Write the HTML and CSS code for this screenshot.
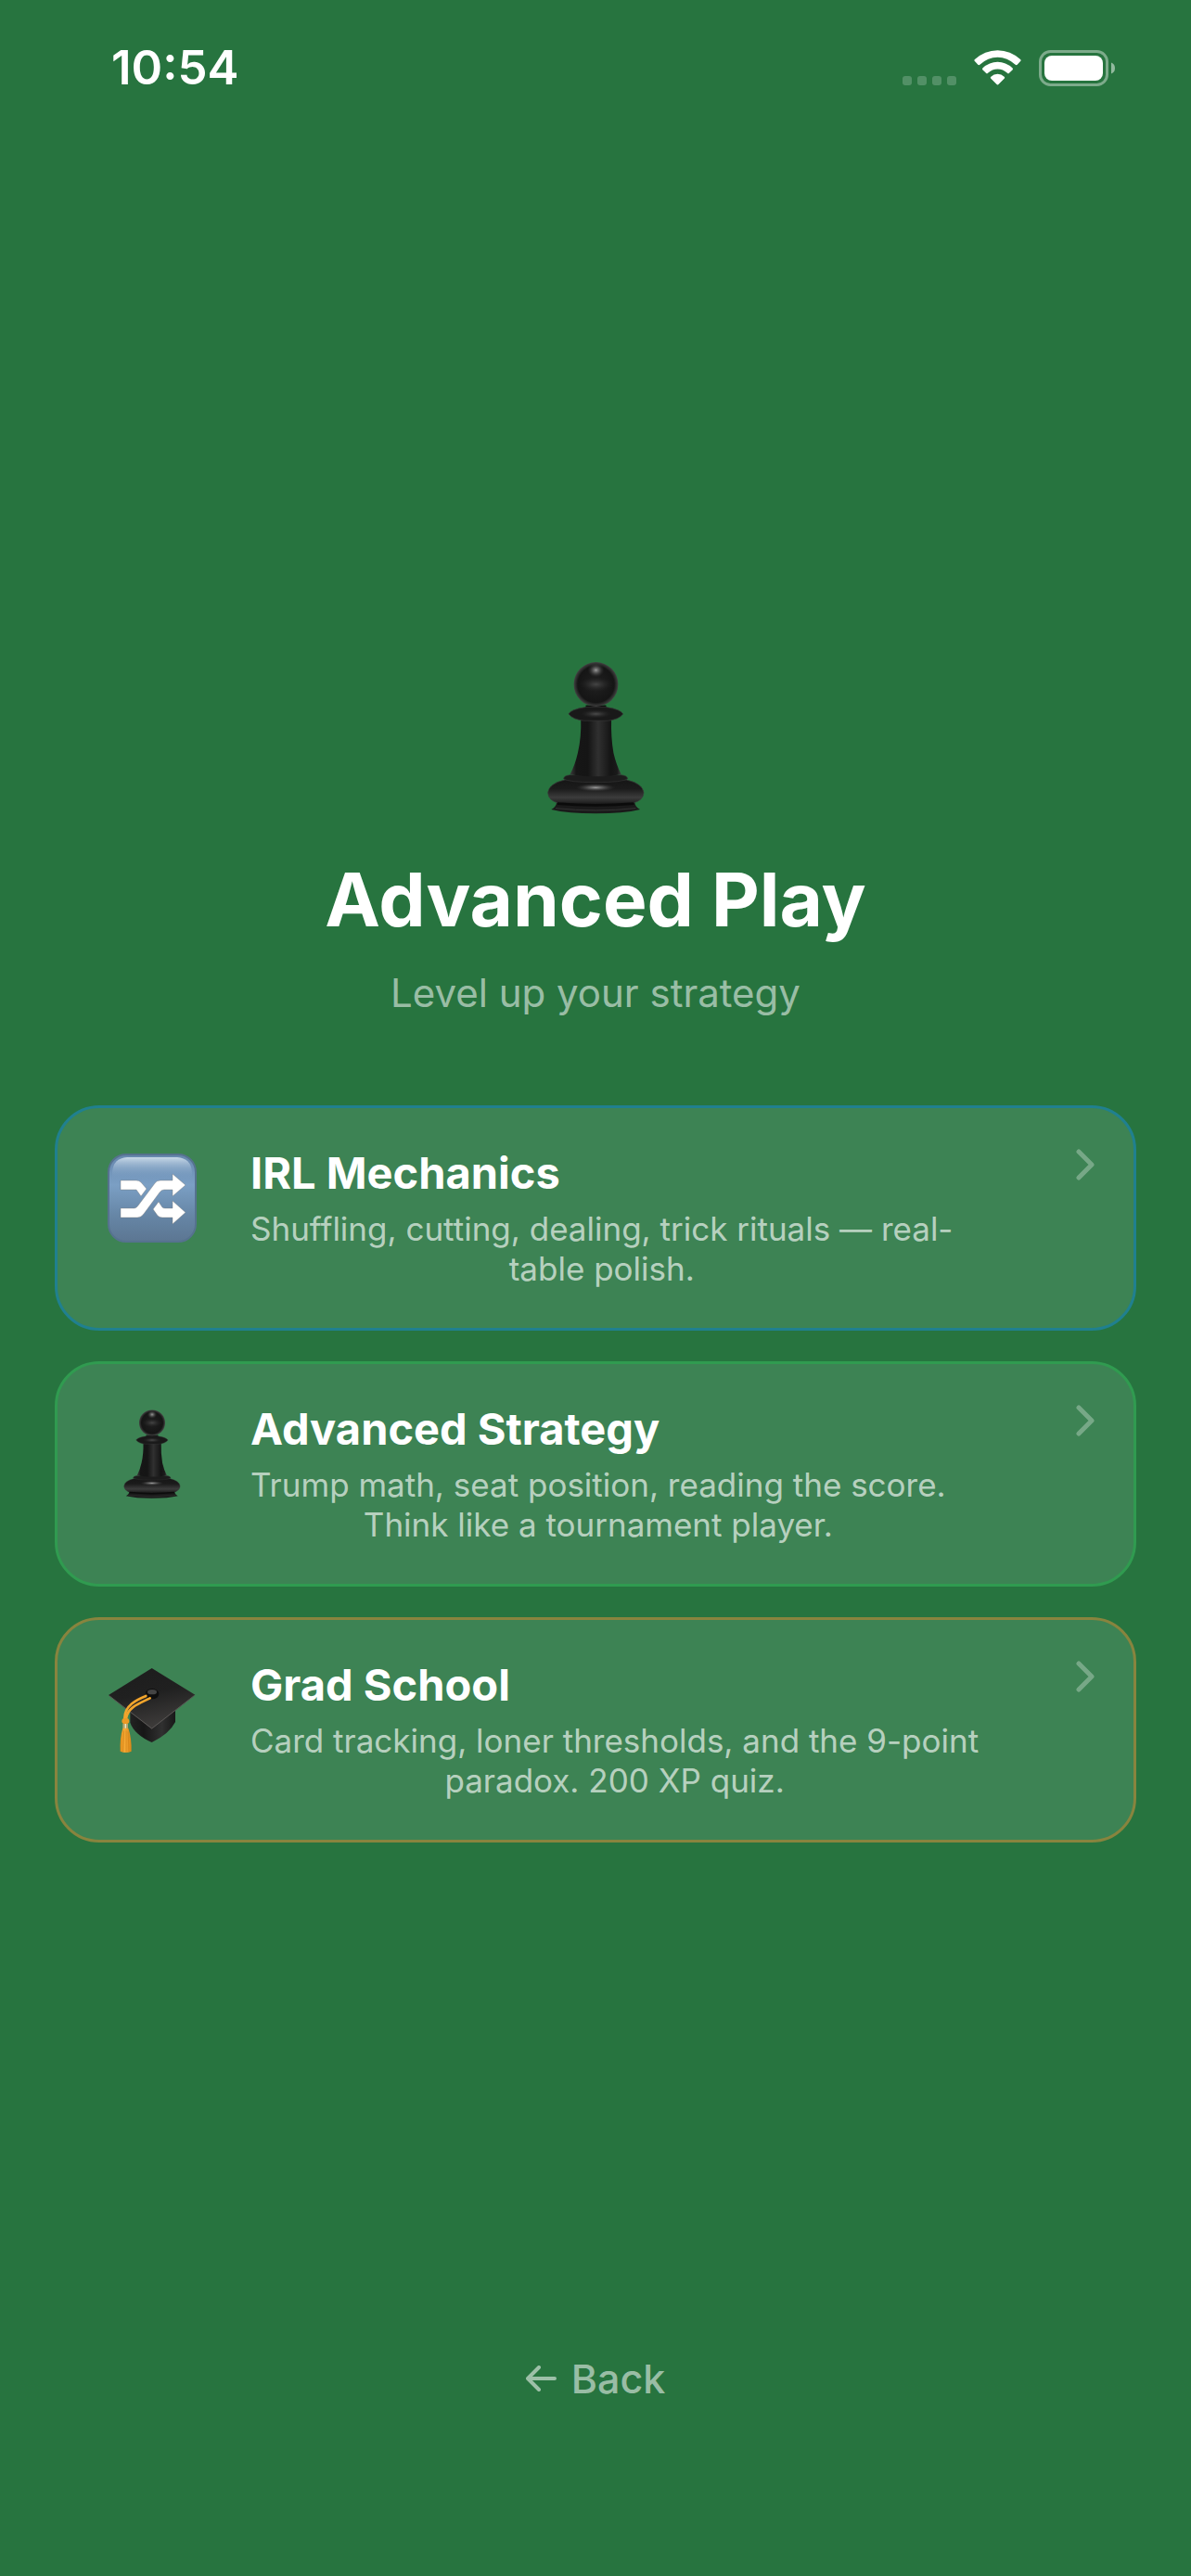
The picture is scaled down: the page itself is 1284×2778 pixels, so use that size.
FILE: index.html
```html
<!DOCTYPE html>
<html lang="en">
<head>
    <meta charset="UTF-8">
    <meta name="viewport" content="width=device-width, initial-scale=1.0">
    <title>Advanced Play</title>
    <link rel="stylesheet" href="styles.css">
</head>
<body>
    <!-- Shared pawn artwork -->
    <svg class="defs" width="0" height="0" aria-hidden="true">
        <defs>
            <linearGradient id="stem" x1="0" x2="1" y1="0" y2="0">
                <stop offset="0" stop-color="#3c3c3c"/>
                <stop offset="0.12" stop-color="#161616"/>
                <stop offset="0.35" stop-color="#151515"/>
                <stop offset="0.55" stop-color="#303030"/>
                <stop offset="0.8" stop-color="#141414"/>
                <stop offset="0.92" stop-color="#1a1a1a"/>
                <stop offset="1" stop-color="#424242"/>
            </linearGradient>
            <radialGradient id="ball" cx="0.5" cy="0.5" r="0.5">
                <stop offset="0" stop-color="#202020"/>
                <stop offset="0.82" stop-color="#151515"/>
                <stop offset="1" stop-color="#424242"/>
            </radialGradient>
            <radialGradient id="shine">
                <stop offset="0" stop-color="#9a9a9a"/>
                <stop offset="0.4" stop-color="#686868" stop-opacity="0.7"/>
                <stop offset="1" stop-color="#303030" stop-opacity="0"/>
            </radialGradient>
            <linearGradient id="base" x1="0" x2="0" y1="0" y2="1">
                <stop offset="0" stop-color="#161616"/>
                <stop offset="0.35" stop-color="#1b1b1b"/>
                <stop offset="0.7" stop-color="#3c3c3c"/>
                <stop offset="1" stop-color="#151515"/>
            </linearGradient>
            <symbol id="pawn" viewBox="50 38 322 494">
                <path d="M66 518Q84 508 83 495H337Q336 508 354 518Q300 531 210 531T66 518Z" fill="#1a1a1a"/>
                <path d="M80 514Q210 528 340 514" fill="none" stroke="#333" stroke-width="3"/>
                <path d="M110 422Q58 434 55 464Q57 489 88 497Q140 504 210 504T332 497Q364 489 366 464Q363 434 310 422Z" fill="url(#base)" stroke="#3a3a3a" stroke-width="2"/>
                <ellipse cx="210" cy="447" rx="65" ry="13" fill="url(#shine)"/>
                <path d="M86 499Q210 510 334 499" fill="none" stroke="#0b0b0b" stroke-width="8"/>
                <path d="M106 418Q107 408 128 406H292Q312 408 314 418Q300 430 210 430T106 418Z" fill="#1c1c1c" stroke="#333" stroke-width="2"/>
                <path d="M162 222Q164 285 152 335Q143 375 127 404Q160 411 210 411T293 404Q277 375 268 335Q259 285 261 222Z" fill="url(#stem)"/>
                <path d="M178 180V192H244V180Z" fill="#0c0c0c"/>
                <path d="M122 208Q130 193 178 186H244Q290 193 299 208Q285 226 250 230H172Q136 226 122 208Z" fill="#191919" stroke="#3a3a3a" stroke-width="2"/>
                <ellipse cx="211" cy="208" rx="50" ry="14" fill="url(#shine)" opacity="0.4"/>
                <circle cx="211" cy="112" r="72" fill="url(#ball)"/>
                <ellipse cx="211" cy="112" rx="55" ry="24" fill="url(#shine)" opacity="0.3"/>
                <ellipse cx="211" cy="66" rx="27" ry="23" fill="url(#shine)"/>
            </symbol>
            <symbol id="chevron" viewBox="0 0 20 34">
                <path d="M3 3L17 17L3 31" fill="none" stroke="currentColor" stroke-width="5" stroke-linecap="round" stroke-linejoin="round"/>
            </symbol>
        </defs>
    </svg>

    <header class="status-bar">
        <span class="time">10:54</span>
        <div class="status-icons">
            <svg class="dots" viewBox="0 0 58 10" aria-hidden="true">
                <rect width="10" height="10" rx="3"/>
                <rect x="16" width="10" height="10" rx="3"/>
                <rect x="32" width="10" height="10" rx="3"/>
                <rect x="48" width="10" height="10" rx="3"/>
            </svg>
            <svg class="wifi" viewBox="300 71 153 113" aria-hidden="true">
                <path d="M302 101Q335 71 376.500 71T451 101Q453 104 451 106L440 118Q437 120 434 118Q408 94 376.500 94T319 118Q316 120 313 118L302 106Q300 104 302 101Z"/>
                <path d="M328 129Q350 109 376.500 109T425 129Q427 132 425 134L414 145Q411 148 408 145Q394 132 376.500 132T345 145Q342 148 339 145L328 134Q326 132 328 129Z"/>
                <path d="M355 157Q364 148 376.500 148T398 157Q401 160 398 163L380 181Q376.500 185 373 181L355 163Q352 160 355 157Z"/>
            </svg>
            <svg class="battery" viewBox="0 0 82 39" aria-hidden="true">
                <rect x="1.500" y="1.500" width="72" height="36" rx="11" fill="none" stroke="#fff" stroke-opacity="0.4" stroke-width="3"/>
                <rect x="6" y="6" width="63" height="27" rx="8" fill="#fff"/>
                <path d="M78 13.500Q82 15 82 19.500T78 25.500Z" fill="#fff" fill-opacity="0.5"/>
            </svg>
        </div>
    </header>

    <main class="content">
        <svg class="hero" aria-hidden="true"><use href="#pawn"/></svg>
        <h1>Advanced Play</h1>
        <p class="subtitle">Level up your strategy</p>

        <div class="options">
            <button class="card blue" type="button">
                <svg class="card-icon" viewBox="0 0 96 96" aria-hidden="true">
                    <defs>
                        <linearGradient id="tile" x1="0" x2="0" y1="0" y2="1">
                            <stop offset="0" stop-color="#6687ad"/>
                            <stop offset="0.35" stop-color="#7b9fc4"/>
                            <stop offset="0.7" stop-color="#6686a6"/>
                            <stop offset="1" stop-color="#5c7692"/>
                        </linearGradient>
                        <linearGradient id="gloss" x1="0" x2="0" y1="0" y2="1">
                            <stop offset="0" stop-color="#c8d9e8"/>
                            <stop offset="1" stop-color="#7b9fc4" stop-opacity="0"/>
                        </linearGradient>
                    </defs>
                    <rect x="1" y="1" width="94" height="94" rx="19" fill="url(#tile)" stroke="#56728f" stroke-width="2"/>
                    <path d="M5 27V20Q6 5 21 4H75Q90 5 91 20V27Z" fill="url(#gloss)"/>
                    <path d="M14 29H31Q34 29 36 31L42 38L36 46L31 39H14ZM14 59H29Q31 59 33 56L51 32Q53 29 57 29H70V22L84 34L70 46V39H61Q58 39 56 42L39 65Q36 69 32 69H14ZM55 52L59 58Q60 59 62 59H70V51L84 63.500L70 76V69H59Q56 69 54 67L49 60Z" fill="#fff" stroke="#777" stroke-opacity="0.4"/>
                </svg>
                <span class="card-text">
                    <span class="card-title">IRL Mechanics</span>
                    <span class="card-desc">Shuffling, cutting, dealing, trick rituals — real-<br>table polish.</span>
                </span>
                <svg class="chevron" aria-hidden="true"><use href="#chevron"/></svg>
            </button>

            <button class="card green" type="button">
                <svg class="card-icon" aria-hidden="true"><use href="#pawn"/></svg>
                <span class="card-text">
                    <span class="card-title">Advanced Strategy</span>
                    <span class="card-desc">Trump math, seat position, reading the score.<br>Think like a tournament player.</span>
                </span>
                <svg class="chevron" aria-hidden="true"><use href="#chevron"/></svg>
            </button>

            <button class="card orange" type="button">
                <svg class="card-icon" viewBox="48 51 288 288" aria-hidden="true">
                    <defs>
                        <linearGradient id="board" x1="0" x2="0.3" y1="0" y2="1">
                            <stop offset="0" stop-color="#1c1c1c"/>
                            <stop offset="0.5" stop-color="#202020"/>
                            <stop offset="1" stop-color="#3c3a39"/>
                        </linearGradient>
                        <linearGradient id="cap" x1="0" x2="1" y1="0" y2="0">
                            <stop offset="0" stop-color="#222"/>
                            <stop offset="0.3" stop-color="#171717"/>
                            <stop offset="0.7" stop-color="#303030"/>
                            <stop offset="1" stop-color="#181818"/>
                        </linearGradient>
                        <linearGradient id="tassel" x1="0" x2="1" y1="0" y2="0">
                            <stop offset="0" stop-color="#dd8b19"/>
                            <stop offset="0.4" stop-color="#f7ab36"/>
                            <stop offset="1" stop-color="#d98617"/>
                        </linearGradient>
                    </defs>
                    <path d="M121 195V236Q134 274 191 300Q248 272 267 234V195Z" fill="url(#cap)"/>
                    <path d="M191 60L331 146L191 257L51 147Z" fill="url(#board)"/>
                    <path d="M53 149L191 255L329 148" fill="none" stroke="#5a5755" stroke-width="3"/>
                    <ellipse cx="192" cy="143" rx="22" ry="17" fill="#0e0e0e"/>
                    <ellipse cx="192" cy="137" rx="15" ry="8" fill="#444"/>
                    <g fill="none" stroke="#f3a52c" stroke-width="8" stroke-linecap="round">
                        <path d="M172 150C140 163 103 181 103 222"/>
                        <path d="M185 157C156 172 113 185 108 222"/>
                    </g>
                    <ellipse cx="106" cy="231" rx="12" ry="10" fill="#eb9a25"/>
                    <path d="M97 240H114V256H97Z" fill="#b6a46b"/>
                    <path d="M104 240H108V256H104Z" fill="#f0e6c2"/>
                    <path d="M97 254H115Q126 285 125 329Q107 337 89 329Q87 285 97 254Z" fill="url(#tassel)"/>
                    <path d="M101 262L98 330M108 262V332M114 265L117 330" fill="none" stroke="#d28218" stroke-width="2"/>
                </svg>
                <span class="card-text">
                    <span class="card-title">Grad School</span>
                    <span class="card-desc">Card tracking, loner thresholds, and the 9-point<br>paradox. 200 XP quiz.</span>
                </span>
                <svg class="chevron" aria-hidden="true"><use href="#chevron"/></svg>
            </button>
        </div>
    </main>

    <footer class="footer">
        <button class="back" type="button">
            <svg class="arrow" viewBox="0 0 33 28" aria-hidden="true">
                <path d="M31 14H3M14 2L2 14L14 26" fill="none" stroke="currentColor" stroke-width="4" stroke-linecap="round" stroke-linejoin="round"/>
            </svg>
            Back
        </button>
    </footer>
</body>
</html>
```

FILE: styles.css
```css
* {
    box-sizing: border-box;
}

body {
    margin: 0;
    min-height: 100vh;
    display: flex;
    flex-direction: column;
    font-family: Inter, 'Liberation Sans', sans-serif;
    background: #27743f; /* Table green */
    color: white;
}

.defs {
    position: absolute;
}

/* Status bar */
.status-bar {
    display: flex;
    justify-content: space-between;
    align-items: center;
    padding: 43px 82px 0 120px;
}

.time {
    font-size: 51px;
    line-height: 60px;
    font-weight: 600;
}

.status-icons {
    display: flex;
    align-items: center;
    fill: white;
}

.dots {
    width: 58px;
    height: 10px;
    margin: 27px 19px 0 0;
    opacity: 0.2;
}

.wifi {
    width: 51px;
    height: 38px;
    margin-right: 19px;
}

.battery {
    width: 82px;
    height: 39px;
}

/* Main content */
.content {
    flex: 1;
    display: flex;
    flex-direction: column;
    align-items: center;
    justify-content: center;
    padding: 58px 59px 0;
}

.hero {
    width: 107px;
    height: 165px;
}

h1 {
    margin: 42px 0 0;
    font-size: 80px;
    line-height: 100px;
    font-weight: 700;
}

.subtitle {
    margin: 25px 0 0;
    font-size: 42px;
    line-height: 52px;
    color: rgba(255, 255, 255, 0.55);
}

.options {
    width: 100%;
    margin-top: 95px;
    display: flex;
    flex-direction: column;
    gap: 33px;
}

.card {
    display: flex;
    align-items: flex-start;
    width: 100%;
    padding: 42px 42px 42px 54px;
    border: 3px solid;
    border-radius: 48px;
    background: #3d8354;
    color: white;
    font-family: inherit;
    cursor: pointer;
}

.blue {
    border-color: #20808f;
}

.green {
    border-color: #309b50;
}

.orange {
    border-color: #88843e;
}

.card-icon {
    flex: none;
    width: 96px;
    height: 96px;
    margin: 7px 58px 0 0;
}

.card-text {
    flex: 1;
    display: flex;
    flex-direction: column;
    align-items: flex-start;
    gap: 11px;
}

.card-title {
    font-size: 47px;
    line-height: 56px;
    font-weight: 700;
}

.card-desc {
    font-size: 35px;
    line-height: 43px;
    text-align: center;
    color: rgba(255, 255, 255, 0.65);
}

.chevron {
    flex: none;
    width: 20px;
    height: 34px;
    margin-top: 2px;
    color: rgba(255, 255, 255, 0.3);
}

/* Footer */
.footer {
    display: flex;
    justify-content: center;
    padding-bottom: 187px;
}

.back {
    display: flex;
    align-items: center;
    gap: 16px;
    padding: 0;
    border: none;
    background: none;
    color: rgba(255, 255, 255, 0.55);
    font-family: inherit;
    font-size: 43px;
    line-height: 52px;
    font-weight: 500;
    cursor: pointer;
}

.arrow {
    width: 33px;
    height: 28px;
}
```
